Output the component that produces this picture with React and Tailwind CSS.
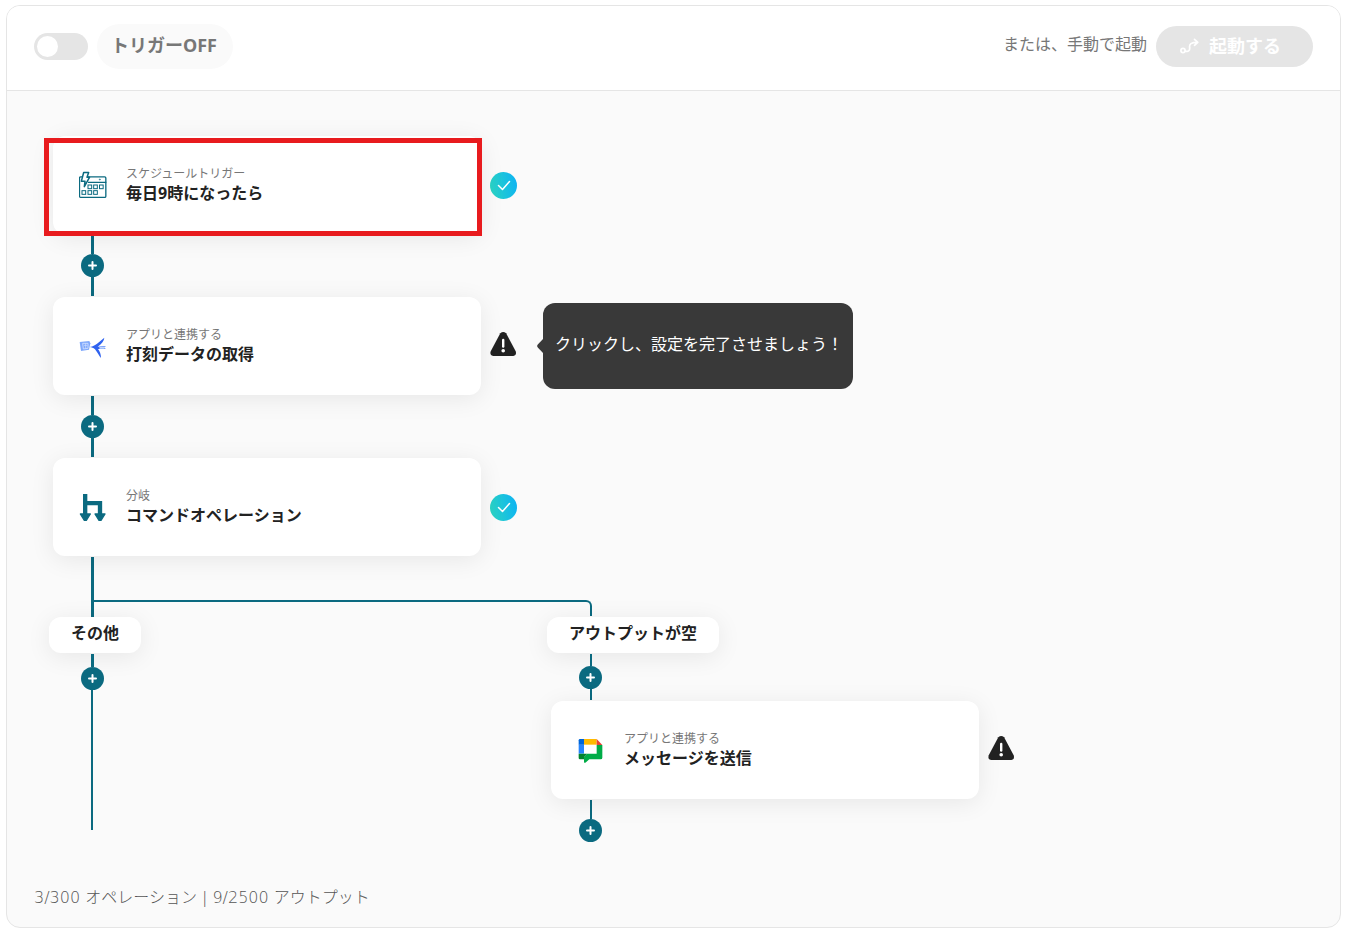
import React, { useState } from "react";

const FONT = "font-['Noto_Sans','Noto_Sans_CJK_JP',sans-serif]";

function CalendarIcon() {
  return (
    <svg viewBox="129 123 84 84" className="size-7 shrink-0" fill="none" stroke="#0b6a80" strokeWidth="4" aria-hidden="true">
      <rect x="130.5" y="140.5" width="79" height="61.5" rx="3.5" />
      <path d="M156 157H211" />
      <path d="M143 127.500H158L153 142H160.500L145 170L147 154H136Z" fill="#fff" strokeWidth="4.500" strokeLinejoin="round" />
      <circle cx="191.500" cy="148.500" r="1.500" strokeWidth="2.500" />
      <g strokeWidth="3">
        <rect x="156" y="165" width="11" height="11" />
        <rect x="173" y="165" width="11" height="11" />
        <rect x="190.500" y="165" width="11" height="11" />
        <rect x="138" y="182" width="11" height="11" />
        <rect x="156" y="182" width="11" height="11" />
        <rect x="173" y="182" width="11" height="11" />
      </g>
    </svg>
  );
}

function SwallowIcon() {
  return (
    <svg viewBox="117 126 84 84" className="size-7 shrink-0" aria-hidden="true">
      <path d="M119 156L148 153L151 160L147 179L123 183Z" fill="#7fa8fb" />
      <path d="M128 160H144V175L130 177Z" fill="none" stroke="#d3e1ff" strokeWidth="2.500" />
      <path d="M132 166H142M137 160V176" stroke="#d3e1ff" strokeWidth="2" />
      <path d="M149 171C160 170 166 165 173 160L193 143C192 153 186 160 173 170L197 169L191 173L197 176L174 177C179 184 183 192 183 204C177 199 173 187 165 178C160 173 155 172 149 171Z" fill="#2f62ef" />
      <path d="M179 170L198 168L191 173L198 177L179 177Z" fill="#7fa8fb" />
      <path d="M178 173.500H192" stroke="#fff" strokeWidth="2.500" />
    </svg>
  );
}

function BranchIcon() {
  return (
    <svg viewBox="117 129 84 84" className="size-7 shrink-0" fill="none" aria-hidden="true">
      <path d="M135.500 132V194M135.500 159.500H180V194" stroke="#0b6a80" strokeWidth="13" />
      <path d="M121 192H151L139 211H133Z" fill="#0b6a80" stroke="#0b6a80" strokeWidth="4" strokeLinejoin="round" />
      <path d="M165 192H195L183 211H177Z" fill="#0b6a80" stroke="#0b6a80" strokeWidth="4" strokeLinejoin="round" />
    </svg>
  );
}

function ChatIcon() {
  return (
    <svg viewBox="141 438 84 84" className="size-7 shrink-0" aria-hidden="true">
      <path d="M146 464H162V491H146Z" fill="#2684fc" />
      <path d="M150 447H162V464H146V451Q146 447 150 447Z" fill="#0066da" />
      <path d="M162 447H200V464H162Z" fill="#ffba00" />
      <path d="M200 447L217 465H200Z" fill="#ea4335" />
      <path d="M200 465H217V503Q217 508 212 508H178L168 517Q162 521 162 515V502L172 491H200Z" fill="#00ac47" />
      <path d="M146 491H172L162 502V508H150Q146 508 146 504Z" fill="#00832d" />
    </svg>
  );
}

function DoneBadge() {
  return (
    <svg viewBox="0 0 27 27" className="size-[27px] shrink-0" role="img" aria-label="完了">
      <defs>
        <linearGradient id="done" x1="0" y1="0.6" x2="1" y2="0.4">
          <stop offset="0" stopColor="#2bd4c4" />
          <stop offset="1" stopColor="#0db4f2" />
        </linearGradient>
      </defs>
      <circle cx="13.5" cy="13.5" r="13.500" fill="url(#done)" />
      <path d="M8.500 13.500L12.500 17.500L19.500 9.500" fill="none" stroke="#fff" strokeWidth="1.500" strokeLinecap="round" strokeLinejoin="round" />
    </svg>
  );
}

function WarningBadge() {
  return (
    <svg viewBox="0 1 27 27" className="size-[27px] shrink-0 overflow-visible" role="img" aria-label="未設定">
      <path d="M10.300 1.200Q13.200-1.400 16.100 1.200L25.800 19.500Q26.800 23.500 23.300 24H3.100Q-.4 23.500.6 19.500Z" fill="#222" />
      <path d="M13.200 8V14.500" stroke="#fff" strokeWidth="2.400" strokeLinecap="round" />
      <circle cx="13.200" cy="18.800" r="1.800" fill="#fff" />
    </svg>
  );
}

function AddButton() {
  return (
    <button type="button" aria-label="追加" className="flex size-[23px] shrink-0 items-center justify-center rounded-full bg-[#0b6a80]">
      <svg viewBox="0 0 9 9" className="size-[9px]" stroke="#fff" strokeWidth="2" strokeLinecap="round" aria-hidden="true">
        <path d="M4.500 1V8M1 4.500H8" />
      </svg>
    </button>
  );
}

function Connector() {
  return (
    <div className="ml-8 flex w-[23px] flex-col items-center py-px">
      <span className="h-[19px] w-[3px] bg-[#0b6a80]" />
      <AddButton />
      <span className="h-[19px] w-[3px] bg-[#0b6a80]" />
    </div>
  );
}

function Node({ icon, kind, title, status, highlighted, children }) {
  return (
    <div className="ml-1 flex items-center">
      <div className="relative">
        <button type="button" className="flex h-[98px] w-[428px] items-center gap-[19px] rounded-xl bg-white pl-[26px] text-left shadow-[0_4px_24px_rgba(0,0,0,0.08)]">
          {icon}
          <span className="flex flex-col pb-0.5">
            <span className="text-xs leading-[18px] text-[#777]">{kind}</span>
            <span className="text-base leading-5 font-bold text-[#222]">{title}</span>
          </span>
        </button>
        {highlighted && <span className="pointer-events-none absolute top-0.5 -right-px -bottom-0.5 -left-[9px] border-5 border-[#e81b1e]" />}
      </div>
      <div className="ml-[9px] flex">{status}</div>
      {children}
    </div>
  );
}

function BranchLabel({ children }) {
  return (
    <div className="flex h-9 items-center self-start rounded-xl bg-white px-[22px] pb-1 text-base font-bold text-[#222] shadow-[0_4px_24px_rgba(0,0,0,0.08)]">
      {children}
    </div>
  );
}

export default function App() {
  const [on, setOn] = useState(false);
  return (
    <main className={`${FONT} bg-white pt-[5px] pr-[7px] pb-[5px] pl-[6px]`}>
      <div className="overflow-hidden rounded-[14px] border border-[#e5e5e5] bg-[#fafafa]">
        <header className="flex items-center justify-between border-b border-[#e5e5e5] bg-white px-[27px] pt-[18px] pb-[21px]">
          <div className="flex items-center gap-[9px]">
            <input
              id="trigger"
              type="checkbox"
              role="switch"
              checked={on}
              onChange={(e) => setOn(e.target.checked)}
              className="h-[27px] w-[54px] appearance-none rounded-full bg-[#e5e5e5] p-[3px] before:block before:size-[21px] before:rounded-full before:bg-white checked:bg-[#0b6a80] checked:before:ml-[27px]"
            />
            <label htmlFor="trigger" className="flex h-[45px] items-center rounded-full bg-[#fafafa] pr-4 pb-1 pl-[14px] text-lg font-bold text-[#777]">
              トリガー{on ? "ON" : "OFF"}
            </label>
          </div>
          <div className="flex items-center gap-[9px]">
            <span className="pb-1.5 text-base text-[#777]">または、手動で起動</span>
            <button type="button" disabled className="flex h-[41px] items-center gap-[10px] rounded-full bg-[#e5e5e5] pr-8 pb-0.5 pl-6 text-lg font-bold text-white">
              <svg viewBox="0 0 19 16" className="h-4 w-[19px]" fill="none" stroke="currentColor" strokeWidth="1.7" strokeLinecap="round" strokeLinejoin="round" aria-hidden="true">
                <circle cx="3" cy="12.500" r="2.100" />
                <path d="M5.200 13C8.500 14.500 10 12 9.600 9.500C9.200 6 11 4.300 17.500 4.300M14.500 1.300L17.800 4.300L14.500 7.300" />
              </svg>
              起動する
            </button>
          </div>
        </header>

        <section className="flex flex-col pt-[45px] pl-[42px]">
          <Node icon={<CalendarIcon />} kind="スケジュールトリガー" title="毎日9時になったら" status={<DoneBadge />} highlighted />
          <Connector />
          <Node icon={<SwallowIcon />} kind="アプリと連携する" title="打刻データの取得" status={<WarningBadge />}>
            <div role="tooltip" className="ml-5 flex items-center">
              <svg viewBox="0 0 6 14" className="h-[14px] w-[6px]" aria-hidden="true">
                <path d="M6 0L.8 5.500Q-.5 7 .8 8.500L6 14Z" fill="#393939" />
              </svg>
              <p className="flex h-[86px] w-[310px] items-center rounded-xl bg-[#393939] pb-1 pl-3 text-base whitespace-nowrap text-white">
                クリックし、設定を完了させましょう！
              </p>
            </div>
          </Node>
          <Connector />
          <Node icon={<BranchIcon />} kind="分岐" title="コマンドオペレーション" status={<DoneBadge />} />

          <div className="flex pt-px pl-[42px]">
            <span className="h-[60px] w-[3px] bg-[#0b6a80]" />
            <span className="mt-[43px] h-4 w-[498px] rounded-tr-md border-t-2 border-r-2 border-[#0b6a80]" />
          </div>

          <div className="flex">
            <div className="flex w-[498px] shrink-0 flex-col">
              <BranchLabel>その他</BranchLabel>
              <div className="ml-8 flex w-[23px] flex-col items-center pt-px">
                <span className="h-[13px] w-[3px] bg-[#0b6a80]" />
                <AddButton />
                <span className="ml-[10px] h-[140px] w-0.5 self-start bg-[#0b6a80]" />
              </div>
            </div>
            <div className="flex flex-col">
              <BranchLabel>アウトプットが空</BranchLabel>
              <div className="ml-8 flex w-[23px] flex-col py-px">
                <span className="ml-[11px] h-3 w-0.5 bg-[#0b6a80]" />
                <AddButton />
                <span className="ml-[11px] h-[11px] w-0.5 bg-[#0b6a80]" />
              </div>
              <Node icon={<ChatIcon />} kind="アプリと連携する" title="メッセージを送信" status={<WarningBadge />} />
              <div className="ml-8 flex w-[23px] flex-col pt-px">
                <span className="ml-[11px] h-[19px] w-0.5 bg-[#0b6a80]" />
                <AddButton />
              </div>
            </div>
          </div>
        </section>

        <footer className="px-[27px] pt-11 pb-[17px] font-['DejaVu_Sans','Noto_Sans_CJK_JP',sans-serif] text-base leading-6 font-light text-[#555]">
          3/300 オペレーション | 9/2500 アウトプット
        </footer>
      </div>
    </main>
  );
}
